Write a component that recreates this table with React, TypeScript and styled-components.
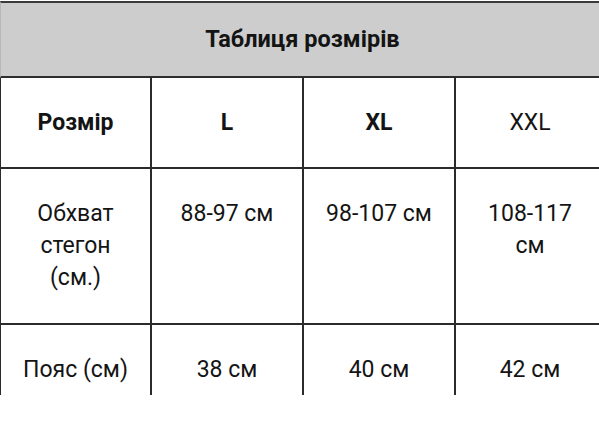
import styled, { createGlobalStyle } from 'styled-components';

const GlobalStyle = createGlobalStyle`
  html, body {
    margin: 0;
    padding: 0;
    background: #ffffff;
    overflow: hidden;
  }

  body {
    font-family: Roboto, 'Noto Sans', 'Liberation Sans', sans-serif;
    color: #141414;
  }
`;

const Page = styled.div`
  padding-top: 1px;
  width: 604px;
`;

const SizeTable = styled.table`
  width: 604px;
  table-layout: fixed;
  border-collapse: separate;
  border-spacing: 0;
`;

const TitleCell = styled.th`
  height: 73px;
  padding: 0;
  background: #cdcdcd;
  border-top: 2px solid #3a3a3a;
  border-bottom: 2px solid #2e2e2e;
  border-left: 1px solid #b8b8b8;
  font-size: 23.5px;
  font-weight: 700;
  line-height: 73px;
  text-align: center;
  vertical-align: middle;
`;

const Row = styled.tr<{ $height: number; $last?: boolean }>`
  & > td {
    height: ${(p) => p.$height}px;
    border-bottom: ${(p) => (p.$last ? 'none' : '2px solid #2b2b2b')};
  }
`;

const Cell = styled.td<{ $bold?: boolean }>`
  box-sizing: border-box;
  padding: 29px 18px 0;
  border-right: 2px solid #2b2b2b;
  font-size: 23px;
  font-weight: ${(p) => (p.$bold ? 700 : 400)};
  line-height: 32px;
  text-align: center;
  vertical-align: top;

  &:first-child {
    border-left: 1px solid #2b2b2b;
  }

  &:last-child {
    border-right: none;
  }
`;

const rows = [
  { label: 'Обхват стегон (см.)', values: ['88-97 см', '98-107 см', '108-117 см'], height: 156 },
  { label: 'Пояс (см)', values: ['38 см', '40 см', '42 см'], height: 70 },
];

export default function App() {
  return (
    <Page>
      <GlobalStyle />
      <SizeTable>
        <colgroup>
          <col style={{ width: 152 }} />
          <col style={{ width: 152 }} />
          <col style={{ width: 152 }} />
          <col style={{ width: 148 }} />
        </colgroup>
        <thead>
          <tr>
            <TitleCell colSpan={4}>Таблиця розмірів</TitleCell>
          </tr>
        </thead>
        <tbody>
          <Row $height={91}>
            <Cell $bold>Розмір</Cell>
            <Cell $bold>L</Cell>
            <Cell $bold>XL</Cell>
            <Cell>XXL</Cell>
          </Row>
          {rows.map((row, i) => (
            <Row key={row.label} $height={row.height} $last={i === rows.length - 1}>
              <Cell>{row.label}</Cell>
              {row.values.map((v) => (
                <Cell key={v}>{v}</Cell>
              ))}
            </Row>
          ))}
        </tbody>
      </SizeTable>
    </Page>
  );
}
